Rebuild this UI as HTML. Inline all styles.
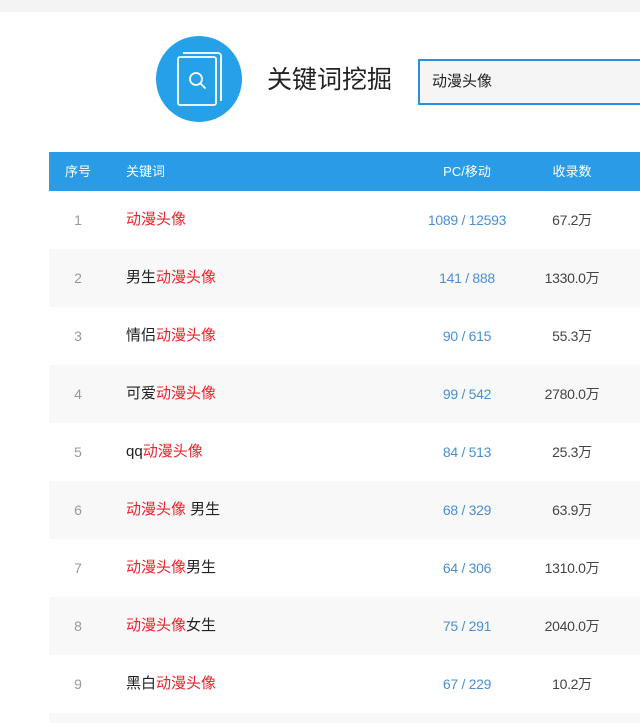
<!DOCTYPE html>
<html><head><meta charset="utf-8"><style>
html,body{margin:0;width:640px;height:723px;overflow:hidden}
body{background:#fff;font-family:"Liberation Sans","Noto Sans CJK SC",sans-serif;position:relative}
.top{position:absolute;left:0;top:0;width:640px;height:12px;background:#f4f4f4}
.circ{position:absolute;left:156px;top:36px;width:86px;height:86px;border-radius:50%;background:#25a1ea}
.title{position:absolute;left:267px;top:62px;font-size:25px;color:#222;line-height:36px}
.inp{position:absolute;left:418px;top:59px;width:240px;height:42px;border:2px solid #2a8fdc;background:#f5f5f5;font-size:15px;color:#222;line-height:42px;padding-left:12px}
.hdr{position:absolute;left:49px;top:152px;width:600px;height:39px;background:#2a9be6;color:#fff;font-size:13px;line-height:39px}
.row{position:absolute;left:49px;width:600px;height:58px;line-height:58px;font-size:15px}
.row.g{background:#f8f8f8}
.c1{position:absolute;left:0;width:58px;text-align:center;color:#999;font-size:14px}
.c2{position:absolute;left:77px;color:#222}
.c3{position:absolute;left:360px;width:116px;text-align:center;color:#4a90d0;font-size:14px;letter-spacing:-0.3px}
.c4{position:absolute;left:480px;width:86px;text-align:center;color:#444;font-size:14px;letter-spacing:-0.3px}
.r{color:#e8242c}
</style></head><body>
<div class="top"></div>
<div class="circ"><svg width="86" height="86" viewBox="0 0 86 86"><g fill="none" stroke="#fff" stroke-width="1.8"><rect x="22" y="21" width="38" height="48" rx="2"/><path d="M27 17h35a3 3 0 0 1 3 3v45"/><circle cx="40" cy="43" r="6"/><path d="M44.5 47.5l5 5"/></g></svg></div>
<div class="title">关键词挖掘</div>
<div class="inp">动漫头像</div>
<div class="hdr"><span style="position:absolute;left:0;width:58px;text-align:center">序号</span><span style="position:absolute;left:77px">关键词</span><span style="position:absolute;left:360px;width:116px;text-align:center">PC/移动</span><span style="position:absolute;left:480px;width:86px;text-align:center">收录数</span></div>
<div class="row" style="top:191px"><span class="c1">1</span><span class="c2"><span class="r">动漫头像</span></span><span class="c3">1089 / 12593</span><span class="c4">67.2万</span></div>
<div class="row g" style="top:249px"><span class="c1">2</span><span class="c2">男生<span class="r">动漫头像</span></span><span class="c3">141 / 888</span><span class="c4">1330.0万</span></div>
<div class="row" style="top:307px"><span class="c1">3</span><span class="c2">情侣<span class="r">动漫头像</span></span><span class="c3">90 / 615</span><span class="c4">55.3万</span></div>
<div class="row g" style="top:365px"><span class="c1">4</span><span class="c2">可爱<span class="r">动漫头像</span></span><span class="c3">99 / 542</span><span class="c4">2780.0万</span></div>
<div class="row" style="top:423px"><span class="c1">5</span><span class="c2">qq<span class="r">动漫头像</span></span><span class="c3">84 / 513</span><span class="c4">25.3万</span></div>
<div class="row g" style="top:481px"><span class="c1">6</span><span class="c2"><span class="r">动漫头像</span> 男生</span><span class="c3">68 / 329</span><span class="c4">63.9万</span></div>
<div class="row" style="top:539px"><span class="c1">7</span><span class="c2"><span class="r">动漫头像</span>男生</span><span class="c3">64 / 306</span><span class="c4">1310.0万</span></div>
<div class="row g" style="top:597px"><span class="c1">8</span><span class="c2"><span class="r">动漫头像</span>女生</span><span class="c3">75 / 291</span><span class="c4">2040.0万</span></div>
<div class="row" style="top:655px"><span class="c1">9</span><span class="c2">黑白<span class="r">动漫头像</span></span><span class="c3">67 / 229</span><span class="c4">10.2万</span></div>
<div class="row g" style="top:713px;height:10px"></div>
</body></html>
